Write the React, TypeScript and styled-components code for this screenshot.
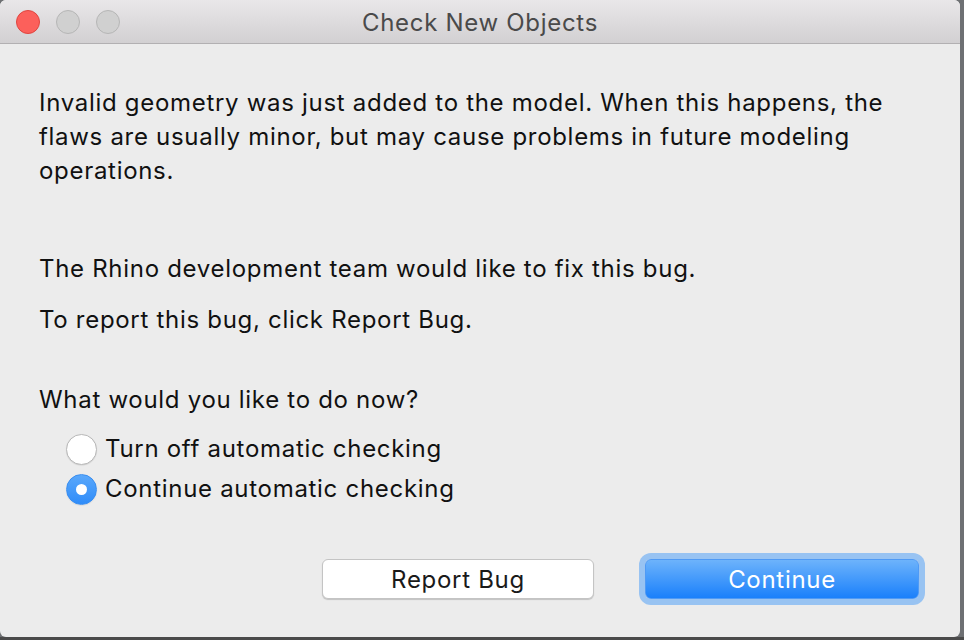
import React, { useState } from 'react';
import styled, { createGlobalStyle } from 'styled-components';

const GlobalStyle = createGlobalStyle`
  html, body {
    margin: 0;
    padding: 0;
    background: #6d6f72;
  }
  body {
    font-family: Inter, "Liberation Sans", sans-serif;
    -webkit-font-smoothing: antialiased;
  }
`;

const Screen = styled.div`
  width: 964px;
  height: 640px;
  overflow: hidden;
  background: linear-gradient(to bottom, #6e7073 0, #6e7073 637px, #4a4a4a 637px);
`;

const Window = styled.div`
  width: 960px;
  height: 637px;
  background: #ececec;
  border-radius: 6px;
  overflow: hidden;
  display: flex;
  flex-direction: column;
`;

const TitleBar = styled.div`
  position: relative;
  height: 43px;
  flex-shrink: 0;
  background: linear-gradient(to bottom, #e9e7e9, #d2d0d2);
  border-bottom: 1px solid #b2b0b2;
  display: flex;
  align-items: center;
  justify-content: center;
`;

const Lights = styled.div`
  position: absolute;
  left: 16px;
  top: 10px;
  display: flex;
  gap: 16px;
`;

const Light = styled.span<{ $color: string; $edge: string }>`
  width: 24px;
  height: 24px;
  box-sizing: border-box;
  border-radius: 50%;
  background: ${({ $color }) => $color};
  border: 1px solid ${({ $edge }) => $edge};
`;

const Title = styled.div`
  font-size: 24px;
  color: #4a4a4a;
  letter-spacing: 0.7px;
  margin-top: 1px;
`;

const Body = styled.div`
  flex: 1;
  display: flex;
  flex-direction: column;
  padding: 42px 40px 0 39px;
  color: #111;
  font-size: 24px;
  line-height: 34px;
  letter-spacing: 0.7px;
`;

const Para = styled.p<{ $top?: number }>`
  margin: ${({ $top }) => $top ?? 0}px 0 0;
`;

const RadioGroup = styled.div`
  display: flex;
  flex-direction: column;
  margin: 12px 0 0 27px;
`;

const RadioRow = styled.label`
  display: flex;
  align-items: center;
  gap: 8px;
  height: 40px;
  cursor: default;
`;

const RadioDot = styled.span<{ $on: boolean }>`
  width: 31px;
  height: 31px;
  flex-shrink: 0;
  box-sizing: border-box;
  border-radius: 50%;
  display: flex;
  align-items: center;
  justify-content: center;
  background: ${({ $on }) => ($on ? 'linear-gradient(to bottom, #5aa8fb, #2f8cf9)' : '#fff')};
  border: 1px solid ${({ $on }) => ($on ? '#3a8ef0' : '#b9b9b9')};
  box-shadow: 0 0.5px 1px rgba(0, 0, 0, 0.12);

  &::after {
    content: '';
    display: ${({ $on }) => ($on ? 'block' : 'none')};
    width: 11px;
    height: 11px;
    border-radius: 50%;
    background: #fff;
  }
`;

const Buttons = styled.div`
  display: flex;
  justify-content: flex-end;
  align-items: center;
  gap: 51px;
  margin-top: 50px;
  margin-right: 1px;
`;

const Button = styled.button<{ $primary?: boolean }>`
  width: ${({ $primary }) => ($primary ? 274 : 272)}px;
  height: 40px;
  box-sizing: border-box;
  border-radius: 6px;
  font-family: inherit;
  font-size: 24px;
  letter-spacing: 0.7px;
  padding: 0;
  color: ${({ $primary }) => ($primary ? '#fff' : '#1a1a1a')};
  background: ${({ $primary }) =>
    $primary ? 'linear-gradient(to bottom, #6db3fb, #1a80fb)' : '#fff'};
  border: 1px solid ${({ $primary }) => ($primary ? '#4f9af5' : '#c4c4c4')};
  box-shadow: ${({ $primary }) =>
    $primary
      ? '0 0 0 6px #98c3f2'
      : '0 1px 1px rgba(0, 0, 0, 0.18)'};
`;

export default function App() {
  const [choice, setChoice] = useState<'off' | 'on'>('on');

  return (
    <Screen>
      <GlobalStyle />
      <Window>
        <TitleBar>
          <Lights>
            <Light $color="#fc605b" $edge="#e0453f" />
            <Light $color="#d0d0d0" $edge="#b6b6b6" />
            <Light $color="#d0d0d0" $edge="#b6b6b6" />
          </Lights>
          <Title>Check New Objects</Title>
        </TitleBar>
        <Body>
          <Para>
            Invalid geometry was just added to the model. When this happens, the flaws are
            usually minor, but may cause problems in future modeling operations.
          </Para>
          <Para $top={64}>The Rhino development team would like to fix this bug.</Para>
          <Para $top={17}>To report this bug, click Report Bug.</Para>
          <Para $top={46}>What would you like to do now?</Para>
          <RadioGroup>
            <RadioRow onClick={() => setChoice('off')}>
              <RadioDot $on={choice === 'off'} />
              Turn off automatic checking
            </RadioRow>
            <RadioRow onClick={() => setChoice('on')}>
              <RadioDot $on={choice === 'on'} />
              Continue automatic checking
            </RadioRow>
          </RadioGroup>
          <Buttons>
            <Button>Report Bug</Button>
            <Button $primary>Continue</Button>
          </Buttons>
        </Body>
      </Window>
    </Screen>
  );
}
